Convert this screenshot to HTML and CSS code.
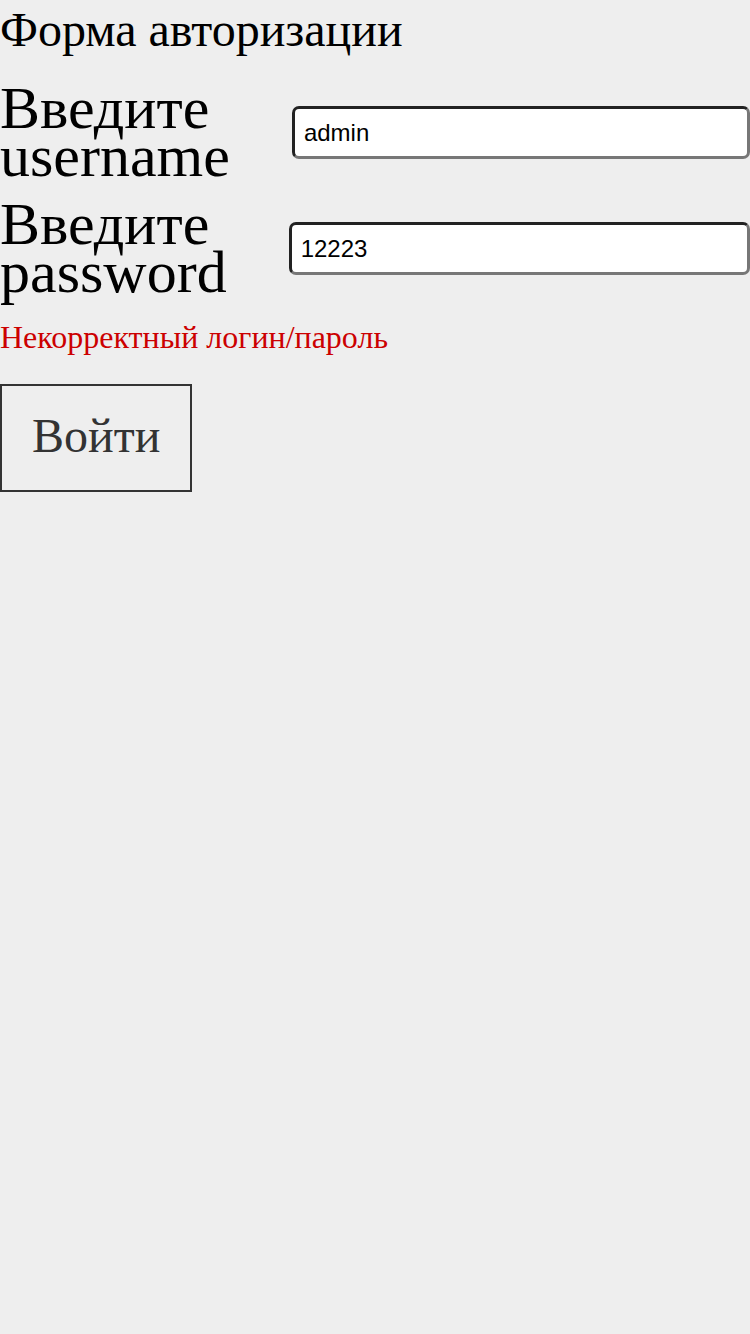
FILE: index.html
```html
<!DOCTYPE html>
<html lang="ru">
<head>
<meta charset="utf-8">
<title>Форма авторизации</title>
<link rel="stylesheet" href="styles.css">
</head>
<body>
<main class="auth">
  <div class="auth-title">Форма авторизации</div>
  <form class="auth-form">
    <div class="field">
      <label class="field-label" for="username">Введите username</label>
      <input class="field-input" id="username" type="text" value="admin">
    </div>
    <div class="field">
      <label class="field-label" for="password">Введите password</label>
      <input class="field-input" id="password" type="text" value="12223">
    </div>
    <div class="auth-error">Некорректный логин/пароль</div>
    <button class="auth-submit" type="button">Войти</button>
  </form>
</main>
</body>
</html>
```
FILE: styles.css
```css
html, body {
  margin: 0;
  padding: 0;
  background: #eeeeee;
}
body {
  font-family: "Liberation Serif", "Times New Roman", serif;
  color: #000;
}
.auth {
  display: flex;
  flex-direction: column;
}
.auth-title {
  font-size: 48px;
  line-height: 55px;
  padding-top: 2px;
}
.auth-form {
  display: flex;
  flex-direction: column;
  align-items: flex-start;
  padding-top: 27px;
}
.field {
  display: flex;
  align-items: center;
  gap: 62px;
  width: 100%;
  margin-bottom: 20px;
}
.field-label {
  font-size: 60px;
  line-height: 48px;
  width: min-content;
  flex: none;
}
.field-input {
  flex: 1;
  min-width: 0;
  height: 53px;
  box-sizing: border-box;
  font-family: "Liberation Sans", Arial, sans-serif;
  font-size: 24px;
  padding: 2px 9px 0;
  background: #fff;
  color: #000;
  border-width: 3px;
  border-style: solid;
  border-color: #222 #777 #777 #222;
  border-radius: 7px;
  outline: none;
}
.auth-error {
  color: #cc0000;
  font-size: 32px;
  line-height: 37px;
  margin-top: 3px;
}
.auth-submit {
  margin-top: 28px;
  font-family: "Liberation Serif", "Times New Roman", serif;
  font-size: 48px;
  color: #333;
  background: transparent;
  border: 2px solid #333;
  border-radius: 0;
  padding: 0 30px 6px;
  height: 108px;
}
```
